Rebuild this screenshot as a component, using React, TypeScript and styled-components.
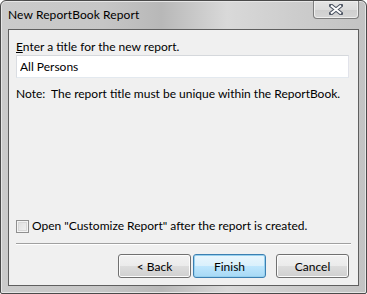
import React, { useState } from 'react';
import styled, { createGlobalStyle } from 'styled-components';

const GlobalStyle = createGlobalStyle`
  html, body {
    margin: 0;
    padding: 0;
    background: #ffffff;
  }
  body {
    font-family: Lato, "Open Sans", "Liberation Sans", sans-serif;
    font-size: 12px;
    color: #000;
  }
`;

// Window frame (Windows 7 basic look)
const Frame = styled.div`
  width: 367px;
  height: 294px;
  box-sizing: border-box;
  border: 1px solid #4a4a4a;
  border-radius: 6px 6px 2px 2px;
  background: linear-gradient(90deg, #cbcbcb 0%, #c6c6c6 28%, #b8b8b8 44%, #d9d9d9 62%, #cdcdcd 80%, #c3c3c3 100%);
  display: flex;
  flex-direction: column;
  padding: 0 7px 7px 7px;
  box-shadow: inset 0 0 0 1px #e6e6e6;
`;

const TitleBar = styled.div`
  height: 28px;
  display: flex;
  justify-content: space-between;
  align-items: flex-start;
`;

const TitleText = styled.div`
  padding-top: 6px;
  font-size: 12px;
  color: #000;
  letter-spacing: 0.1px;
`;

const CloseButton = styled.div`
  width: 46px;
  height: 18px;
  box-sizing: border-box;
  border: 1px solid #7e7e7e;
  border-top: none;
  border-radius: 0 0 4px 4px;
  background: linear-gradient(180deg, #e4e4e4 0%, #dcdcdc 50%, #cfcfcf 51%, #d6d6d6 100%);
  box-shadow: inset 0 0 0 1px #efefef;
  display: flex;
  align-items: center;
  justify-content: center;
`;

const Client = styled.div`
  flex: 1;
  background: #f0f0f0;
  border: 1px solid #5f5f5f;
  display: flex;
  flex-direction: column;
  padding: 9px 9px 7px 7px;
`;

const Label = styled.div`
  line-height: 16px;
  u {
    text-decoration: underline;
  }
`;

const TextBox = styled.input`
  height: 23px;
  box-sizing: border-box;
  border: 1px solid;
  border-color: #d5d8dc #e2e3ea #e3e9ef #dadde2;
  background: #ffffff;
  padding: 0 3px;
  font-family: inherit;
  font-size: 12px;
  color: #000;
  outline: none;
  width: 100%;
`;

const Note = styled.div`
  margin-top: 8px;
  line-height: 16px;
`;

const Spacer = styled.div`
  flex: 1;
`;

const CheckRow = styled.label`
  display: flex;
  align-items: center;
  gap: 3px;
  line-height: 16px;
`;

const CheckBox = styled.span`
  width: 13px;
  height: 13px;
  box-sizing: border-box;
  border: 1px solid #8f8f8f;
  background: linear-gradient(135deg, #dcdcdc 0%, #f4f4f4 100%);
  box-shadow: inset 0 0 0 1px #f4f4f4, inset 0 0 0 2px #d8d8d8;
`;

const Separator = styled.div`
  margin-top: 9px;
  margin-right: -2px;
  height: 1px;
  background: #a0a0a0;
  border-bottom: 1px solid #ffffff;
`;

const ButtonRow = styled.div`
  margin-top: 9px;
  display: flex;
  justify-content: flex-end;
  gap: 2px;
`;

const Button = styled.button<{ $primary?: boolean; $gapLeft?: number }>`
  width: 73px;
  height: 24px;
  margin-left: ${(p) => p.$gapLeft ?? 0}px;
  box-sizing: border-box;
  border: 1px solid ${(p) => (p.$primary ? '#3c7fb1' : '#707070')};
  border-radius: 3px;
  font-family: inherit;
  font-size: 12px;
  color: #000;
  padding: 0;
  background: ${(p) =>
    p.$primary
      ? 'linear-gradient(180deg, #eaf6fd 0%, #d9f0fc 50%, #bee6fd 51%, #a7d9f5 100%)'
      : 'linear-gradient(180deg, #f2f2f2 0%, #ebebeb 50%, #dddddd 51%, #cfcfcf 100%)'};
  box-shadow: inset 0 0 0 1px ${(p) => (p.$primary ? '#98d1ef' : '#fcfcfc')};
`;

const CloseGlyph = () => (
  <svg width="14" height="11" viewBox="0 0 14 11">
    <path d="M2 1.5 L12 9.5 M12 1.5 L2 9.5" stroke="#4d5563" strokeWidth="4" strokeLinecap="square" />
    <path d="M2 1.5 L12 9.5 M12 1.5 L2 9.5" stroke="#ffffff" strokeWidth="2" strokeLinecap="butt" />
  </svg>
);

const App: React.FC = () => {
  const [title, setTitle] = useState('All Persons');

  return (
    <>
      <GlobalStyle />
      <Frame>
        <TitleBar>
          <TitleText>New ReportBook Report</TitleText>
          <CloseButton>
            <CloseGlyph />
          </CloseButton>
        </TitleBar>
        <Client>
          <Label>
            <u>E</u>nter a title for the new report.
          </Label>
          <TextBox value={title} onChange={(e) => setTitle(e.target.value)} />
          <Note>Note:&nbsp; The report title must be unique within the ReportBook.</Note>
          <Spacer />
          <CheckRow>
            <CheckBox />
            Open "Customize Report" after the report is created.
          </CheckRow>
          <Separator />
          <ButtonRow>
            <Button>&lt; Back</Button>
            <Button $primary>Finish</Button>
            <Button $gapLeft={8}>Cancel</Button>
          </ButtonRow>
        </Client>
      </Frame>
    </>
  );
};

export default App;
